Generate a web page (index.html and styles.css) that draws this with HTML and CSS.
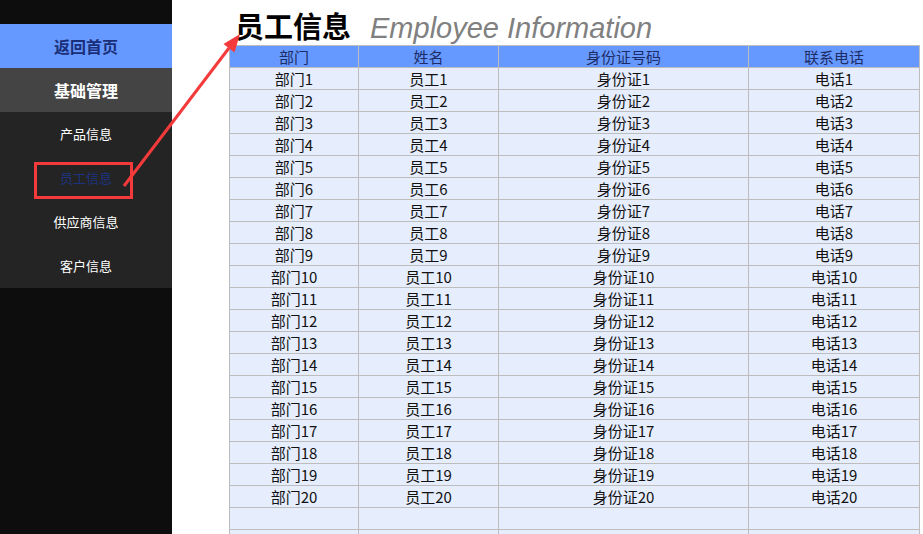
FILE: index.html
```html
<!DOCTYPE html>
<html lang="zh-CN">
<head>
	<meta charset="UTF-8">
	<title>员工信息</title>
	<link rel="stylesheet" href="styles.css">
</head>
<body>
	<div class="wrapper">
		<div class="sidebar">
			<ul class="menu">
				<li class="menu-item menu-home">返回首页</li>
				<li class="menu-item menu-title">基础管理</li>
				<li class="menu-item menu-sub">产品信息</li>
				<li class="menu-item menu-sub menu-active">员工信息</li>
				<li class="menu-item menu-sub">供应商信息</li>
				<li class="menu-item menu-sub">客户信息</li>
			</ul>
		</div>
		<div class="main">
			<h1 class="title">员工信息<span class="title-en">Employee Information</span></h1>
			<table class="grid">
				<thead>
					<tr><th class="c1">部门</th><th class="c2">姓名</th><th class="c3">身份证号码</th><th class="c4">联系电话</th></tr>
				</thead>
				<tbody id="rows"></tbody>
			</table>
		</div>
	</div>
	<!-- 标注 -->
	<svg class="mark" width="923" height="534" viewBox="0 0 923 534">
		<rect x="35.5" y="163.5" width="96" height="34" fill="none" stroke="#f43a3a" stroke-width="3"/>
		<line x1="124" y1="186" x2="229" y2="48" stroke="#f43a3a" stroke-width="3"/>
		<polygon points="240,34 234.5,52.5 223.5,44" fill="#f43a3a"/>
	</svg>
	<script type="text/javascript">
		var tb=document.getElementById("rows");
		var html="";
		for(var i=1;i<=20;i++){
			html+="<tr><td>部门"+i+"</td><td>员工"+i+"</td><td>身份证"+i+"</td><td>电话"+i+"</td></tr>";
		}
		html+="<tr><td></td><td></td><td></td><td></td></tr>";
		html+="<tr><td></td><td></td><td></td><td></td></tr>";
		tb.innerHTML=html;
	</script>
</body>
</html>
```

FILE: styles.css
```css
*{margin: 0;padding: 0;}
html,body{height: 100%;}
body{
	font-family: "Noto Sans CJK SC", "Liberation Sans", sans-serif;
	background-color: #fff;
	overflow: hidden;
}
.wrapper{
	display: flex;
	height: 100%;
}
.sidebar{
	width: 172px;
	flex-shrink: 0;
	background-color: #0d0d0d;
	padding-top: 24px;
	box-sizing: border-box;
}
.menu{list-style: none;}
.menu-item{
	height: 44px;
	line-height: 44px;
	text-align: center;
	color: #fff;
}
.menu-home{
	background-color: #6699ff;
	color: #1a2f7a;
	font-size: 16px;
	font-weight: bold;
}
.menu-title{
	background-color: #444;
	font-size: 16px;
	font-weight: bold;
}
.menu-sub{
	background-color: #242424;
	font-size: 13px;
}
.menu-active{
	color: #1c3380;
}
.main{
	flex: 1;
	padding: 4px 0 0 57px;
}
.title{
	height: 41px;
	line-height: 43px;
	padding-left: 6px;
	font-size: 29px;
	font-weight: bold;
	color: #000;
	white-space: nowrap;
}
.title-en{
	margin-left: 19px;
	font-family: "Liberation Sans", Arial, sans-serif;
	font-style: italic;
	font-weight: normal;
	color: #808080;
}
.grid{
	width: 689px;
	border-collapse: collapse;
	table-layout: fixed;
	font-size: 15px;
}
.grid th,.grid td{
	height: 21px;
	line-height: 21px;
	border: 1px solid #bdbdbd;
	text-align: center;
	padding: 0;
	white-space: nowrap;
}
.grid th{
	background-color: #6699ff;
	color: #1d2c66;
	font-weight: normal;
}
.grid td{
	background-color: #e6edfd;
	color: #111;
}
.c1{width: 128px;}
.c2{width: 139px;}
.c3{width: 249px;}
.c4{width: 170px;}
.mark{
	position: absolute;
	top: 0;
	left: 0;
	pointer-events: none;
}
```
